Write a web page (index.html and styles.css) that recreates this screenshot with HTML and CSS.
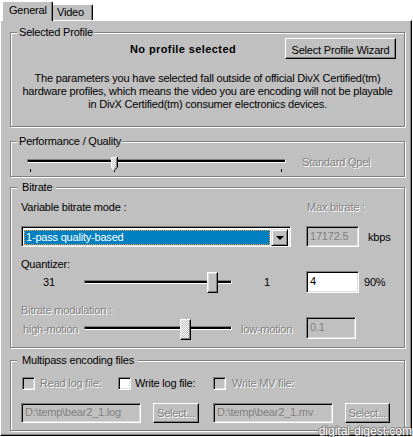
FILE: index.html
```html
<!DOCTYPE html>
<html>
<head>
<meta charset="utf-8">
<link rel="stylesheet" href="styles.css">
</head>
<body>
<div class="dialog">
  <div class="tabs">
    <div class="tab active">General</div>
    <div class="tab">Video</div>
  </div>
  <div class="panel">
    <div class="group g-profile">
      <div class="group-title">Selected Profile</div>
      <div class="profile-row">
        <div class="profile-none">No profile selected</div>
        <div class="btn btn-wizard">Select Profile Wizard</div>
      </div>
      <p class="profile-text">The parameters you have selected fall outside of official DivX Certified(tm)<br>hardware profiles, which means the video you are encoding will not be playable<br>in DivX Certified(tm) consumer electronics devices.</p>
    </div>

    <div class="group g-perf">
      <div class="group-title">Performance / Quality</div>
      <div class="perf-row">
        <div class="slider perf-slider">
          <div class="track"></div>
          <span class="tick tick-a"></span>
          <span class="tick tick-b"></span>
          <span class="tick tick-c"></span>
          <svg class="thumb-pt" style="left:84px" width="7" height="14" viewBox="0 0 7 14">
            <defs>
              <pattern id="chk1" width="2" height="2" patternUnits="userSpaceOnUse">
                <rect width="2" height="2" fill="#c0c0c0"/>
                <rect width="1" height="1" fill="#fff"/>
                <rect x="1" y="1" width="1" height="1" fill="#fff"/>
              </pattern>
            </defs>
            <path d="M0 0H7V10L3.5 13.5L0 10Z" fill="url(#chk1)"/>
            <path d="M0.5 10V0.5H6" stroke="#fff" fill="none"/>
            <path d="M6.5 0V10.2L3.5 13.3" stroke="#000" fill="none"/>
            <path d="M5.5 1V9.8L3.2 12" stroke="#808080" fill="none"/>
            <path d="M0.5 10L3 12.6" stroke="#fff" fill="none"/>
          </svg>
        </div>
        <div class="dis perf-label">Standard Qpel</div>
      </div>
    </div>

    <div class="group g-bitrate">
      <div class="group-title wide">Bitrate</div>
      <div class="br-labels">
        <div class="br-mode-label">Variable bitrate mode :</div>
        <div class="dis">Max bitrate :</div>
      </div>
      <div class="br-combo-row">
        <div class="combo">
          <div class="combo-sel"><span>1-pass quality-based</span></div>
          <div class="combo-btn"><span class="arrow"></span></div>
        </div>
        <div class="edit edit-dis edit-max">17172.5</div>
        <div class="kbps">kbps</div>
      </div>
      <div class="q-label">Quantizer:</div>
      <div class="q-row">
        <div class="q-low">31</div>
        <div class="slider rect-slider">
          <div class="track"></div>
          <div class="thumb-rect" style="left:123px"></div>
        </div>
        <div class="q-high">1</div>
        <div class="edit edit-q">4</div>
        <div class="pct">90%</div>
      </div>
      <div class="dis m-label">Bitrate modulation :</div>
      <div class="m-row">
        <div class="dis m-low">high-motion</div>
        <div class="slider rect-slider">
          <div class="track"></div>
          <div class="thumb-rect thumb-dis" style="left:96px"></div>
        </div>
        <div class="dis m-high">low-motion</div>
        <div class="edit edit-dis edit-m">0.1</div>
      </div>
    </div>

    <div class="group g-multi">
      <div class="group-title wide">Multipass encoding files</div>
      <div class="chk-row">
        <div class="chk-item i1"><span class="chk chk-dis"></span><span class="dis">Read log file:</span></div>
        <div class="chk-item i2"><span class="chk"></span><span>Write log file:</span></div>
        <div class="chk-item i3"><span class="chk chk-dis"></span><span class="dis">Write MV file:</span></div>
      </div>
      <div class="file-row">
        <div class="edit edit-dis edit-file">D:\temp\bear2_1.log</div>
        <div class="btn btn-dis btn-sel1">Select...</div>
        <div class="edit edit-dis edit-file f2">D:\temp\bear2_1.mv</div>
        <div class="btn btn-dis btn-sel2">Select...</div>
      </div>
    </div>
  </div>
  <div class="watermark">digital-digest.com</div>
</div>
</body>
</html>
```
FILE: styles.css
```css
* { box-sizing: border-box; }
html, body { margin: 0; padding: 0; background: #fff; }
body {
  font-family: "Liberation Sans", Arial, sans-serif;
  font-size: 11px;
  line-height: 13px;
  letter-spacing: -0.2px;
  color: #000;
}
.dialog { position: relative; width: 413px; height: 437px; overflow: hidden; }

/* tabs */
.tabs { display: flex; align-items: flex-end; height: 20px; padding-left: 2px; }
.tab {
  background: #c0c0c0;
  border-top: 1px solid #fff;
  border-right: 1px solid #000;
  box-shadow: inset -1px 0 #808080;
  border-radius: 2px 2px 0 0;
  white-space: nowrap;
}
.tab.active {
  position: relative;
  z-index: 1;
  width: 51px;
  height: 20px;
  margin-bottom: -1px;
  border-left: 1px solid #fff;
  padding: 2px 0 0 6px;
}
.tab:not(.active) { width: 40px; height: 16px; padding: 1px 0 0 4px; }

/* panel */
.panel {
  width: 412px;
  height: 416px;
  background: #c0c0c0;
  border-left: 1px solid #fff;
  border-top: 1px solid #fff;
  border-right: 1px solid #000;
  border-bottom: 1px solid #000;
  box-shadow: inset -1px -1px #808080;
  padding: 11px 0 0 9px;
}

.group {
  width: 395px;
  border: 1px solid #808080;
  box-shadow: inset 1px 1px #fff, 1px 1px #fff;
}
.group-title {
  display: table;
  margin: -7px 0 0 6px;
  padding: 0 1px 0 2px;
  background: #c0c0c0;
}
.group-title.wide { padding: 0 4px 0 5px; }

.dis { color: #808080; text-shadow: 1px 1px 0 #fff; }

/* buttons */
.btn {
  display: flex;
  align-items: center;
  justify-content: center;
  background: #c0c0c0;
  border-top: 1px solid #fff;
  border-left: 1px solid #fff;
  border-right: 1px solid #000;
  border-bottom: 1px solid #000;
  box-shadow: inset -1px -1px #808080;
  padding-top: 1px;
  white-space: nowrap;
}
.btn-dis { color: #808080; text-shadow: 1px 1px 0 #fff; }

/* edits */
.edit {
  border-top: 1px solid #808080;
  border-left: 1px solid #808080;
  border-right: 1px solid #fff;
  border-bottom: 1px solid #fff;
  box-shadow: inset 1px 1px #000, inset -1px -1px #dfdfdf;
  background: #fff;
  padding: 3px 0 0 3px;
  white-space: nowrap;
  overflow: hidden;
}
.edit-dis { background: #c0c0c0; color: #808080; }

/* profile */
.g-profile { height: 95px; }
.profile-row { display: flex; align-items: center; height: 21px; margin-top: -1px; padding-left: 119px; }
.profile-none { font-weight: bold; letter-spacing: 0.4px; width: 155px; padding-top: 2px; }
.btn-wizard { width: 111px; height: 21px; padding-top: 3px; }
.profile-text { margin: 13px 0 0; text-align: center; white-space: nowrap; }

/* performance */
.g-perf { height: 36px; margin-top: 14px; }
.perf-row { display: flex; align-items: flex-start; margin-top: 9px; padding-left: 16px; }
.slider { position: relative; flex: none; }
.track {
  height: 4px;
  background: #000;
  border-top: 1px solid #808080;
  border-left: 1px solid #808080;
  border-bottom: 1px solid #fff;
  border-right: 1px solid #fff;
}
.perf-slider { width: 259px; height: 16px; padding-top: 2px; }
.tick { position: absolute; top: 12px; width: 1px; height: 3px; background: #000; }
.tick-a { left: 3px; }
.tick-b { left: 87px; }
.tick-c { left: 254px; }
.thumb-pt { position: absolute; top: 0; display: block; }
.perf-label { margin-left: 16px; margin-top: -1px; }

/* bitrate */
.g-bitrate { height: 161px; margin-top: 10px; }
.br-labels { display: flex; margin-top: 7px; padding-left: 10px; }
.br-mode-label { width: 286px; }
.br-combo-row { display: flex; align-items: center; margin-top: 12px; padding-left: 10px; }
.combo {
  display: flex;
  width: 270px;
  height: 21px;
  border-top: 1px solid #808080;
  border-left: 1px solid #808080;
  border-right: 1px solid #fff;
  border-bottom: 1px solid #fff;
  box-shadow: inset 1px 1px #000, inset -1px -1px #dfdfdf;
  background: #fff;
  padding: 2px;
}
.combo-sel {
  flex: 1;
  margin: 1px 1px 0 0;
  height: 15px;
  background: #0080c0;
  color: #fff;
  border: 1px dotted #ff9a40;
  padding: 0 0 0 1px;
  line-height: 13px;
}
.combo-btn {
  width: 17px;
  height: 17px;
  background: #c0c0c0;
  border-top: 1px solid #dfdfdf;
  border-left: 1px solid #dfdfdf;
  border-right: 1px solid #000;
  border-bottom: 1px solid #000;
  box-shadow: inset 1px 1px #fff, inset -1px -1px #808080;
  display: flex;
  align-items: center;
  justify-content: center;
}
.arrow {
  width: 0; height: 0;
  border-left: 4px solid transparent;
  border-right: 4px solid transparent;
  border-top: 4px solid #000;
  margin-left: 1px;
}
.edit-max { width: 53px; height: 21px; margin-left: 15px; }
.kbps { margin-left: 9px; padding-top: 1px; }

.q-label { margin-top: 11px; padding-left: 10px; }
.q-row { display: flex; align-items: center; height: 22px; padding-left: 32px; }
.q-low { width: 41px; }
.rect-slider { width: 148px; height: 22px; padding-top: 9px; }
.thumb-rect {
  position: absolute;
  top: 1px;
  width: 11px;
  height: 21px;
  background: #c0c0c0;
  border-top: 1px solid #fff;
  border-left: 1px solid #fff;
  border-right: 1px solid #000;
  border-bottom: 1px solid #000;
  box-shadow: inset -1px -1px #808080, inset 1px 1px #dfdfdf;
}
.thumb-dis {
  background-color: #c0c0c0;
  background-image:
    linear-gradient(45deg, #fff 25%, transparent 25%, transparent 75%, #fff 75%),
    linear-gradient(45deg, #fff 25%, transparent 25%, transparent 75%, #fff 75%);
  background-size: 2px 2px;
  background-position: 0 0, 1px 1px;
}
.q-high { width: 74px; padding-left: 32px; }
.edit-q { width: 53px; height: 22px; }
.pct { margin-left: 5px; }

.m-label { margin-top: 11px; padding-left: 10px; }
.m-row { display: flex; align-items: center; height: 22px; padding-left: 12px; }
.m-row > .dis { padding-top: 2px; }
.m-low { width: 61px; }
.m-row .rect-slider .thumb-rect { top: 2px; }
.m-high { width: 74px; padding-left: 9px; }
.edit-m { width: 50px; height: 22px; }

/* multipass */
.g-multi { height: 71px; margin-top: 12px; }
.chk-row { display: flex; height: 13px; margin-top: 10px; padding-left: 11px; }
.chk-item { display: flex; align-items: center; gap: 5px; white-space: nowrap; }
.i1 { width: 96px; }
.i2 { width: 95px; gap: 4px; }
.i3 { gap: 6px; }
.chk {
  width: 13px;
  height: 13px;
  flex: none;
  background: #fff;
  border-top: 1px solid #808080;
  border-left: 1px solid #808080;
  border-right: 1px solid #fff;
  border-bottom: 1px solid #fff;
  box-shadow: inset 1px 1px #000, inset -1px -1px #dfdfdf;
}
.chk-dis { background: #c0c0c0; }
.file-row { display: flex; margin-top: 13px; padding-left: 10px; }
.edit-file { width: 120px; height: 20px; padding-top: 2px; }
.btn-sel1 { width: 46px; height: 20px; margin-left: 12px; }
.f2 { margin-left: 14px; }
.btn-sel2 { width: 45px; height: 20px; margin-left: 12px; }

.watermark {
  position: absolute;
  right: 1px;
  bottom: -1px;
  font-size: 12px;
  line-height: 14px;
  letter-spacing: 0;
  color: #fff;
  text-shadow: 1px 0 #777, -1px 0 #777, 0 1px #777, 0 -1px #777;
}
```
